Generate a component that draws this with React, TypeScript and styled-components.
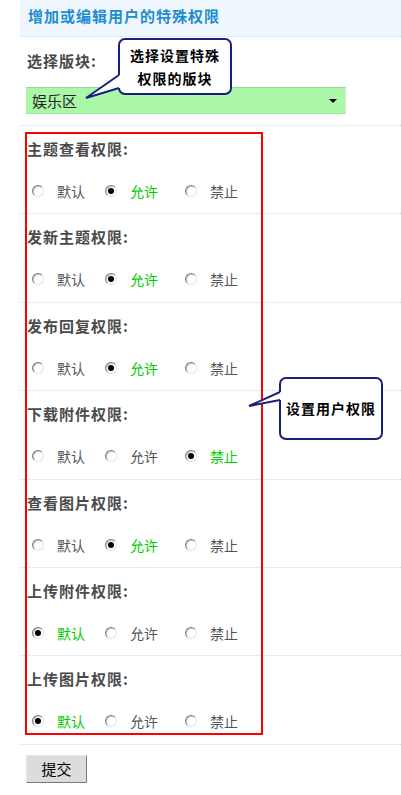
import React, { useState } from 'react';
import styled, { createGlobalStyle } from 'styled-components';

type Choice = 'default' | 'allow' | 'deny';

interface IPermission {
    key: string;
    label: string;
    value: Choice;
}

const initialPermissions: IPermission[] = [
    { key: 'view', label: '主题查看权限', value: 'allow' },
    { key: 'post', label: '发新主题权限', value: 'allow' },
    { key: 'reply', label: '发布回复权限', value: 'allow' },
    { key: 'download', label: '下载附件权限', value: 'deny' },
    { key: 'image', label: '查看图片权限', value: 'allow' },
    { key: 'upload', label: '上传附件权限', value: 'default' },
    { key: 'uploadImage', label: '上传图片权限', value: 'default' },
];

const choices: { value: Choice; text: string }[] = [
    { value: 'default', text: '默认' },
    { value: 'allow', text: '允许' },
    { value: 'deny', text: '禁止' },
];

const GlobalStyle = createGlobalStyle`
    html, body {
        margin: 0;
        padding: 0;
        background: #fff;
        font-family: "Noto Sans CJK SC", "Noto Sans", sans-serif;
    }
`;

const Page = styled.div`
    position: relative;
    margin-left: 20px;
    width: 381px;
`;

const Header = styled.div`
    height: 37px;
    box-sizing: border-box;
    padding: 6px 0 0 8px;
    background: #f0f6fd;
    border-bottom: 1px dotted #c3def2;
`;

const Title = styled.h2`
    margin: 0;
    font-size: 15px;
    line-height: 20px;
    font-weight: bold;
    letter-spacing: 1px;
    color: #1b8dd0;
`;

const Section = styled.div`
    height: 89px;
    box-sizing: border-box;
    border-bottom: 1px dotted #c3def2;
    padding-top: 14px;
`;

const Label = styled.div`
    padding-left: 7px;
    font-size: 15px;
    line-height: 20px;
    font-weight: bold;
    letter-spacing: 1px;
    color: #4a4a4a;
`;

const SelectBox = styled.div`
    display: flex;
    align-items: center;
    margin: 16px 0 0 6px;
    width: 320px;
    height: 27px;
    box-sizing: border-box;
    background: #aaf7a8;
    border-top: 1px solid #9bd59a;
    border-right: 1px solid #d4e8d4;
    border-bottom: 1px solid #a3eaa1;
    font-size: 15px;
    color: #222;
`;

const SelectText = styled.span`
    flex: 1;
    padding-left: 6px;
    height: 100%;
    line-height: 25px;
`;

const SelectArrow = styled.span`
    width: 24px;
    height: 100%;
    display: flex;
    align-items: center;
    justify-content: center;
    background: #acf8aa;

    &::after {
        content: '';
        border-left: 4px solid transparent;
        border-right: 4px solid transparent;
        border-top: 4px solid #000;
    }
`;

const Rows = styled.div`
    position: relative;
`;

const Row = styled.div`
    height: 88.4px;
    box-sizing: border-box;
    border-bottom: 1px dotted #c3def2;
    padding-top: 13px;
`;

const Options = styled.div`
    display: grid;
    grid-template-columns: 73px 80px auto;
    padding-left: 12px;
    margin-top: 22px;
`;

const Option = styled.label<{ checked?: boolean }>`
    display: flex;
    align-items: center;
    gap: 13px;
    font-size: 14px;
    line-height: 20px;
    cursor: pointer;
    color: ${ props => props.checked ? '#00cc00' : '#555' };
`;

const RadioCircle = styled.span<{ checked?: boolean }>`
    position: relative;
    width: 12px;
    height: 12px;
    box-sizing: border-box;
    border-radius: 50%;
    border: 1px solid;
    border-color: #7d7d7d #e4e4e4 #e4e4e4 #7d7d7d;
    background: #fff;
    box-shadow: inset 1px 1px 0 #c8c8c8;

    &::after {
        content: '';
        display: ${ props => props.checked ? 'block' : 'none' };
        position: absolute;
        left: 2px;
        top: 2px;
        width: 6px;
        height: 6px;
        border-radius: 50%;
        background: #000;
    }
`;

const HighlightBox = styled.div`
    position: absolute;
    left: 5px;
    top: 6px;
    bottom: 10px;
    width: 238px;
    box-sizing: border-box;
    border: 2px solid #ff0000;
    pointer-events: none;
`;

const Footer = styled.div`
    padding: 10px 0 0 6px;
`;

const SubmitButton = styled.button`
    width: 61px;
    height: 28px;
    box-sizing: border-box;
    background: #dcdcdc;
    border: 1px solid;
    border-color: #e8e8e8 #7a7a7a #7a7a7a #e8e8e8;
    font-family: "Noto Sans CJK SC", sans-serif;
    font-size: 15px;
    color: #000;
    padding: 0;
    cursor: pointer;
`;

const Callout = styled.div<{ left: number; top: number; width: number; height: number }>`
    position: absolute;
    left: ${ props => props.left }px;
    top: ${ props => props.top }px;
    width: ${ props => props.width }px;
    height: ${ props => props.height }px;
    box-sizing: border-box;
    border: 2px solid #1b1f7c;
    border-radius: 7px;
    background: #fff;
    display: flex;
    flex-direction: column;
    align-items: center;
    justify-content: center;
    font-size: 14px;
    line-height: 23px;
    font-weight: bold;
    letter-spacing: 1px;
    color: #000;
    text-align: center;
`;

const Tail = styled.svg<{ left: number; top: number }>`
    position: absolute;
    left: ${ props => props.left }px;
    top: ${ props => props.top }px;
    overflow: visible;
`;

const CalloutTail = ({ left, top, tip, a, b }: {
    left: number; top: number; tip: [number, number]; a: number; b: number; 
}) => {
    const edge = 32;
    return (
        <Tail left={left} top={top} width={40} height={30}>
            <polygon
                points={`${tip[0]},${tip[1]} ${edge},${a} ${edge + 4},${a} ${edge + 4},${b} ${edge},${b}`}
                fill="#fff" />
            <polyline
                points={`${edge + 1},${a} ${tip[0]},${tip[1]} ${edge + 1},${b}`}
                fill="none" stroke="#1b1f7c" strokeWidth="2" strokeLinejoin="miter" />
        </Tail>
    );
};

const App = () => {
    const [ permissions, setPermissions ] = useState(initialPermissions);

    const choose = (key: string, value: Choice) => {
        setPermissions(list => list.map(p => p.key === key ? { ...p, value } : p));
    };

    return (
        <Page>
            <GlobalStyle />
            <Header>
                <Title>增加或编辑用户的特殊权限</Title>
            </Header>
            <Section>
                <Label>选择版块:</Label>
                <SelectBox>
                    <SelectText>娱乐区</SelectText>
                    <SelectArrow />
                </SelectBox>
            </Section>
            <Rows>
                {permissions.map(p => (
                    <Row key={p.key}>
                        <Label>{p.label}:</Label>
                        <Options>
                            {choices.map(c => (
                                <Option
                                    key={c.value}
                                    checked={p.value === c.value}
                                    onClick={() => choose(p.key, c.value)}>
                                    <RadioCircle checked={p.value === c.value} />
                                    {c.text}
                                </Option>
                            ))}
                        </Options>
                    </Row>
                ))}
                <HighlightBox />
            </Rows>
            <Footer>
                <SubmitButton>提交</SubmitButton>
            </Footer>

            <Callout left={98} top={38} width={114} height={57}>
                <span>选择设置特殊</span>
                <span>权限的版块</span>
            </Callout>
            <CalloutTail left={66} top={72} tip={[0, 26]} a={3} b={16} />

            <Callout left={259} top={377} width={104} height={63}>
                设置用户权限
            </Callout>
            <CalloutTail left={227} top={388} tip={[2, 18]} a={4} b={12} />
        </Page>
    );
};

export default App;
